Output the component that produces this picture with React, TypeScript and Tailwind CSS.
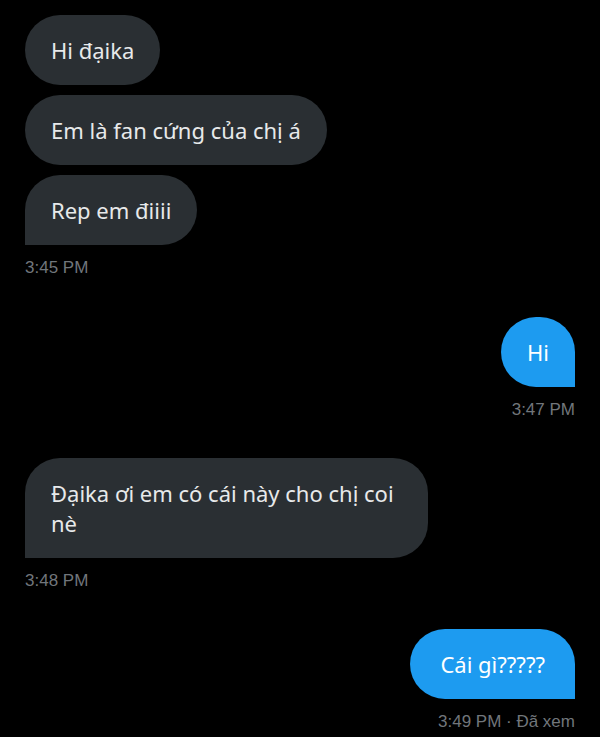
import React from "react";

const textFont = { fontFamily: '"Noto Sans", Roboto, sans-serif' };

function Left({ children, last }: { children: React.ReactNode; last?: boolean }) {
  return (
    <div
      className={`self-start max-w-[403px] bg-[#2a2f33] text-[#e7e9ea] text-[22px] leading-[30px] px-[26px] py-[20px] rounded-[35px] ${last ? "rounded-bl-none" : ""}`}
      style={textFont}
    >
      {children}
    </div>
  );
}

function Right({ children, wide }: { children: React.ReactNode; wide?: boolean }) {
  return (
    <div
      className={`self-end bg-[#1d9bf0] text-white text-[22px] leading-[30px] py-[20px] rounded-[35px] rounded-br-none ${wide ? "px-[30px]" : "px-[26px]"}`}
      style={textFont}
    >
      {children}
    </div>
  );
}

function Time({ children, right }: { children: React.ReactNode; right?: boolean }) {
  return (
    <div
      className={`text-[#71767b] text-[17px] leading-[20px] mt-[13px] ${right ? "self-end" : "self-start"}`}
      style={{ fontFamily: '"Liberation Sans", Arial, sans-serif' }}
    >
      {children}
    </div>
  );
}

export default function App() {
  return (
    <div className="w-[600px] h-[737px] bg-black overflow-hidden">
      <div className="flex flex-col px-[25px] pt-[15px]">
        <div className="flex flex-col gap-[10px]">
          <Left>Hi đạika</Left>
          <Left>Em là fan cứng của chị á</Left>
          <Left last>Rep em điiii</Left>
        </div>
        <Time>3:45 PM</Time>
        <div className="h-[39px]" />
        <Right>Hi</Right>
        <Time right>3:47 PM</Time>
        <div className="h-[38px]" />
        <Left last>Đạika ơi em có cái này cho chị coi nè</Left>
        <Time>3:48 PM</Time>
        <div className="h-[38px]" />
        <Right wide>Cái gì?????</Right>
        <Time right>3:49 PM · Đã xem</Time>
      </div>
    </div>
  );
}
